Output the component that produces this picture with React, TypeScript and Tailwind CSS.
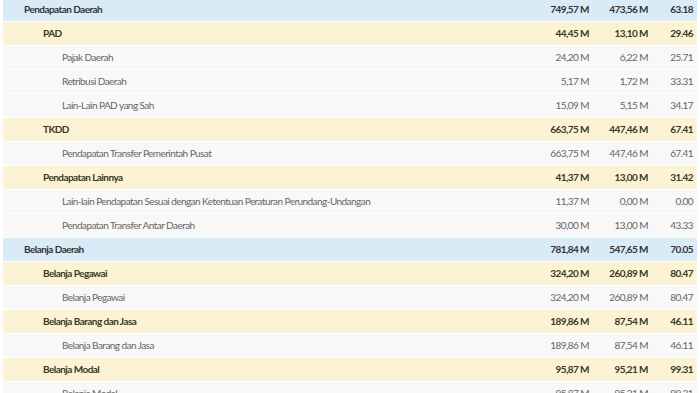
import React from "react";

type Row = { name: string; level: 0 | 1 | 2; a: string; b: string; c: string };

const rows: Row[] = [
  { name: "Pendapatan Daerah", level: 0, a: "749,57 M", b: "473,56 M", c: "63.18" },
  { name: "PAD", level: 1, a: "44,45 M", b: "13,10 M", c: "29.46" },
  { name: "Pajak Daerah", level: 2, a: "24,20 M", b: "6,22 M", c: "25.71" },
  { name: "Retribusi Daerah", level: 2, a: "5,17 M", b: "1,72 M", c: "33.31" },
  { name: "Lain-Lain PAD yang Sah", level: 2, a: "15,09 M", b: "5,15 M", c: "34.17" },
  { name: "TKDD", level: 1, a: "663,75 M", b: "447,46 M", c: "67.41" },
  { name: "Pendapatan Transfer Pemerintah Pusat", level: 2, a: "663,75 M", b: "447,46 M", c: "67.41" },
  { name: "Pendapatan Lainnya", level: 1, a: "41,37 M", b: "13,00 M", c: "31.42" },
  { name: "Lain-lain Pendapatan Sesuai dengan Ketentuan Peraturan Perundang-Undangan", level: 2, a: "11,37 M", b: "0,00 M", c: "0.00" },
  { name: "Pendapatan Transfer Antar Daerah", level: 2, a: "30,00 M", b: "13,00 M", c: "43.33" },
  { name: "Belanja Daerah", level: 0, a: "781,84 M", b: "547,65 M", c: "70.05" },
  { name: "Belanja Pegawai", level: 1, a: "324,20 M", b: "260,89 M", c: "80.47" },
  { name: "Belanja Pegawai", level: 2, a: "324,20 M", b: "260,89 M", c: "80.47" },
  { name: "Belanja Barang dan Jasa", level: 1, a: "189,86 M", b: "87,54 M", c: "46.11" },
  { name: "Belanja Barang dan Jasa", level: 2, a: "189,86 M", b: "87,54 M", c: "46.11" },
  { name: "Belanja Modal", level: 1, a: "95,87 M", b: "95,21 M", c: "99.31" },
  { name: "Belanja Modal", level: 2, a: "95,87 M", b: "95,21 M", c: "99.31" },
];

const rowStyle: Record<number, string> = {
  0: "bg-[#d9ebf7] font-bold text-[#333333]",
  1: "bg-[#fcf3d4] font-bold text-[#3a3828]",
  2: "bg-[#f8f8f8] font-normal text-[#666666]",
};

const indent: Record<number, string> = {
  0: "pl-[21px]",
  1: "pl-[40px]",
  2: "pl-[59px]",
};

export default function App() {
  return (
    <div className="w-[700px] h-[393px] overflow-hidden bg-white" style={{ fontFamily: "Lato, 'Noto Sans', sans-serif" }}>
      <div className="-mt-[2px] px-[3px] flex flex-col gap-px">
        {rows.map((r, i) => (
          <div key={i} className={`flex items-center h-[23px] text-[10px] tracking-[-0.55px] pr-[4px] ${rowStyle[r.level]}`}>
            <div className={`flex-1 whitespace-nowrap ${indent[r.level]}`}>{r.name}</div>
            <div className="w-[80px] text-right">{r.a}</div>
            <div className="w-[59px] text-right">{r.b}</div>
            <div className="w-[45px] text-right">{r.c}</div>
          </div>
        ))}
      </div>
    </div>
  );
}
